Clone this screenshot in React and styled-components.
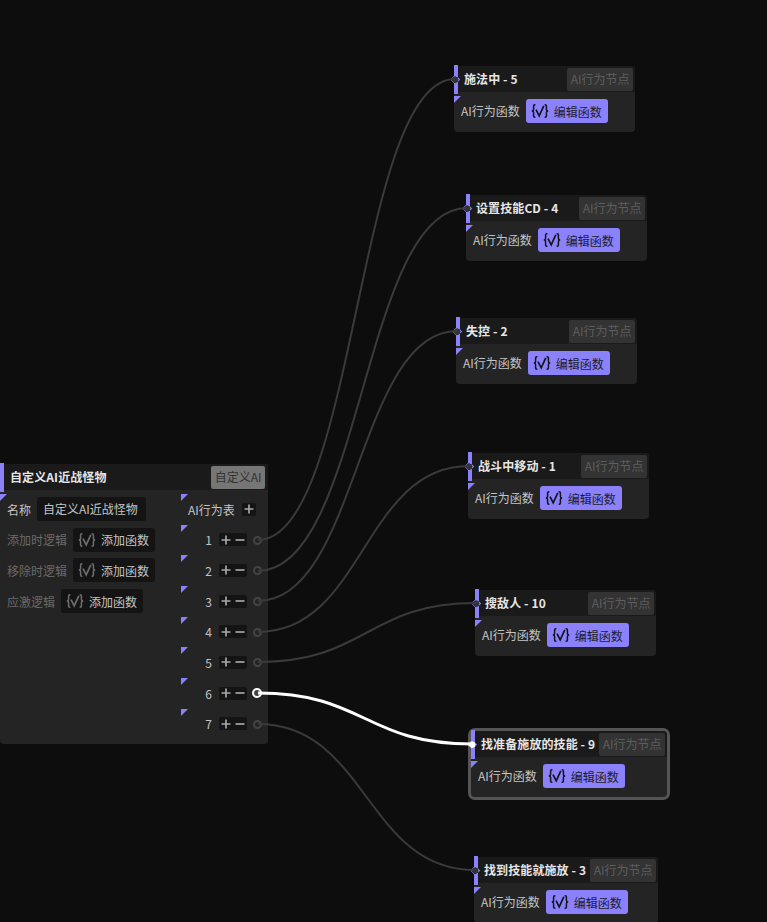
import React from 'react';
import styled, { createGlobalStyle } from 'styled-components';

const nodes = [
  { title: '施法中 - 5', x: 454, y: 66, w: 181 },
  { title: '设置技能CD - 4', x: 466, y: 195, w: 181 },
  { title: '失控 - 2', x: 456, y: 318, w: 181 },
  { title: '战斗中移动 - 1', x: 468, y: 453, w: 181 },
  { title: '搜敌人 - 10', x: 475, y: 590, w: 181 },
  { title: '找准备施放的技能 - 9', x: 471, y: 731, w: 196, selected: true },
  { title: '找到技能就施放 - 3', x: 474, y: 857, w: 184 },
];

const wires = [
  { from: 540, to: 79, x: 455 },
  { from: 571, to: 208, x: 467 },
  { from: 601, to: 331, x: 457 },
  { from: 632, to: 466, x: 469 },
  { from: 662, to: 603, x: 476 },
  { from: 693, to: 744, x: 472, selected: true },
  { from: 724, to: 870, x: 475 },
];

function wirePath({ from, to, x }) {
  const dx = (x - 258) / 2;
  return `M258 ${from} C${258 + dx} ${from} ${x - dx} ${to} ${x} ${to}`;
}

function FnIcon() {
  return (
    <IconSvg viewBox="0 0 18 14" fill="none" stroke="currentColor" strokeWidth="1.5">
      <path d="M4.4 .8H3.8Q2.6 .8 2.6 2V5.5Q2.6 7 .8 7Q2.6 7 2.6 8.5V12Q2.6 13.2 3.8 13.2H4.4" />
      <path d="M13.6 .8H14.2Q15.4 .8 15.4 2V5.5Q15.4 7 17.2 7Q15.4 7 15.4 8.5V12Q15.4 13.2 14.2 13.2H13.6" />
      <path d="M5 5.6L8.2 11.8L12.8 1.8" strokeWidth="1.7" />
    </IconSvg>
  );
}

function PlusIcon() {
  return (
    <SignSvg viewBox="0 0 10 10">
      <path d="M.5 5H9.5M5 .5V9.5" />
    </SignSvg>
  );
}

function MinusIcon() {
  return (
    <SignSvg viewBox="0 0 10 10">
      <path d="M.5 5H9.5" />
    </SignSvg>
  );
}

function BehaviourNode({ title, x, y, w, selected }) {
  return (
    <Node $x={x} $y={y} $w={w} $selected={selected}>
      <TitleBar>
        <AccentBar />
        <InputPin $selected={selected} />
        <Title>{title}</Title>
        <Badge>AI行为节点</Badge>
      </TitleBar>
      <NodeBody>
        <Corner $left={0} $top={4} />
        <NodeLabel>AI行为函数</NodeLabel>
        <FnButton $primary>
          <FnIcon />
          编辑函数
        </FnButton>
      </NodeBody>
    </Node>
  );
}

function App() {
  const rows = [1, 2, 3, 4, 5, 6, 7];
  return (
    <Canvas>
      <GlobalStyle />
      <WireLayer viewBox="0 0 767 922">
        {wires.map((w) => (
          <Wire key={w.from} d={wirePath(w)} $selected={w.selected} />
        ))}
      </WireLayer>

      <MainNode>
        <MainTitleBar>
          <AccentBar />
          <MainTitle>自定义AI近战怪物</MainTitle>
          <MainBadge>自定义AI</MainBadge>
        </MainTitleBar>
        <MainBody>
          <Props>
            <PropRow>
              <Corner $left={-7} $top={-3} />
              <Label>名称</Label>
              <NameInput>自定义AI近战怪物</NameInput>
            </PropRow>
            <PropRow>
              <Label $dim>添加时逻辑</Label>
              <FnButton><FnIcon />添加函数</FnButton>
            </PropRow>
            <PropRow>
              <Label $dim>移除时逻辑</Label>
              <FnButton><FnIcon />添加函数</FnButton>
            </PropRow>
            <PropRow>
              <Label $dim>应激逻辑</Label>
              <FnButton><FnIcon />添加函数</FnButton>
            </PropRow>
          </Props>
          <Table>
            <HeaderRow>
              <Corner $left={0} $top={-3} />
              <Label>AI行为表</Label>
              <SmallBox><PlusIcon /></SmallBox>
            </HeaderRow>
            {rows.map((n) => (
              <ItemRow key={n}>
                <Corner $left={0} $top={-3} />
                <ItemNum>{n}</ItemNum>
                <Controls>
                  <PlusIcon />
                  <MinusIcon />
                </Controls>
                <OutPin $selected={n === 6} />
              </ItemRow>
            ))}
          </Table>
        </MainBody>
      </MainNode>

      {nodes.map((n) => (
        <BehaviourNode key={n.title} {...n} />
      ))}
    </Canvas>
  );
}

const GlobalStyle = createGlobalStyle`
  html, body { margin: 0; padding: 0; background: #0d0d0d; }
  body { font-family: "Noto Sans CJK SC", "Noto Sans", sans-serif; font-size: 12px; }
`;

const Canvas = styled.div`
  position: relative;
  width: 767px;
  height: 922px;
  overflow: hidden;
  background: #0d0d0d;
`;

const WireLayer = styled.svg`
  position: absolute;
  left: 0;
  top: 0;
  width: 767px;
  height: 922px;
  z-index: 2;
  pointer-events: none;
`;

const Wire = styled.path`
  fill: none;
  stroke: ${(p) => (p.$selected ? '#ffffff' : '#3a3a3a')};
  stroke-width: ${(p) => (p.$selected ? 3 : 2)}px;
`;

const IconSvg = styled.svg`
  width: 18px;
  height: 14px;
  margin-right: 5px;
  flex: none;
`;

const SignSvg = styled.svg`
  width: 10px;
  height: 10px;
  flex: none;
  stroke: #a6a6a6;
  stroke-width: 1.7;
  fill: none;
`;

const Node = styled.div`
  position: absolute;
  left: ${(p) => p.$x}px;
  top: ${(p) => p.$y}px;
  width: ${(p) => p.$w}px;
  height: 66px;
  background: #242424;
  border-radius: 4px;
  z-index: 1;
  box-shadow: ${(p) => (p.$selected ? '0 0 0 3px #555555' : 'none')};
`;

const TitleBar = styled.div`
  position: relative;
  display: flex;
  align-items: center;
  justify-content: space-between;
  height: 26px;
  padding: 0 2px 0 10px;
  background: #1a1a1a;
  border-radius: 4px 4px 0 0;
`;

const AccentBar = styled.div`
  position: absolute;
  left: 0;
  top: -1px;
  width: 4px;
  height: 29px;
  background: #8b82fb;
`;

const InputPin = styled.div`
  position: absolute;
  left: -2.25px;
  top: 9.75px;
  width: 6.5px;
  height: 6.5px;
  transform: rotate(45deg);
  background: radial-gradient(circle, ${(p) => (p.$selected ? '#ffffff' : '#333333')} 0 3px, #8b82fb 3.4px);
  z-index: 3;
`;

const Title = styled.div`
  color: #e6e6e6;
  font-weight: 700;
  font-size: 12px;
  letter-spacing: 0.1px;
  line-height: 24px;
  margin-bottom: 1px;
  white-space: nowrap;
`;

const Badge = styled.div`
  height: 23px;
  line-height: 22px;
  padding: 0 3.5px;
  background: #333333;
  color: #5e5e5e;
  border-radius: 2px;
  white-space: nowrap;
`;

const NodeBody = styled.div`
  position: relative;
  display: flex;
  align-items: center;
  gap: 6px;
  height: 38px;
  padding-left: 7px;
`;

const Corner = styled.div`
  position: absolute;
  left: ${(p) => p.$left}px;
  top: ${(p) => p.$top}px;
  width: 0;
  height: 0;
  border-top: 7px solid #8b82fb;
  border-right: 7px solid transparent;
`;

const Label = styled.span`
  color: ${(p) => (p.$dim ? '#6a6a6a' : '#c4c4c4')};
  white-space: nowrap;
`;

const NodeLabel = styled(Label)`
  margin-bottom: 2px;
`;

const FnButton = styled.div`
  display: flex;
  align-items: center;
  height: 24px;
  padding: 0 6px 0 5px;
  border-radius: 3px;
  white-space: nowrap;
  background: ${(p) => (p.$primary ? '#8b82fb' : '#141414')};
  color: ${(p) => (p.$primary ? '#1c1c2e' : '#c4c4c4')};
  svg { color: ${(p) => (p.$primary ? '#14141f' : '#6e6e6e')}; }
`;

const MainNode = styled.div`
  position: absolute;
  left: 0;
  top: 464px;
  width: 268px;
  height: 280px;
  background: #242424;
  border-radius: 0 0 4px 4px;
  z-index: 1;
`;

const MainTitleBar = styled(TitleBar)`
  padding: 0 3px 0 10px;
  border-radius: 0;
`;

const MainTitle = styled(Title)``;

const MainBadge = styled(Badge)`
  padding: 0 3.5px;
  background: #767676;
  color: #333333;
`;

const MainBody = styled.div`
  display: grid;
  grid-template-columns: 181px 87px;
  padding-top: 7px;
`;

const Props = styled.div`
  display: flex;
  flex-direction: column;
  gap: 6.7px;
  padding-left: 7px;
`;

const PropRow = styled.div`
  position: relative;
  display: flex;
  align-items: center;
  gap: 6px;
  height: 24px;
`;

const NameInput = styled.div`
  height: 24px;
  line-height: 23px;
  padding: 0 8px 0 6px;
  background: #141414;
  color: #c4c4c4;
  border-radius: 3px;
  white-space: nowrap;
`;

const Table = styled.div`
  display: flex;
  flex-direction: column;
  gap: 6.7px;
`;

const HeaderRow = styled.div`
  position: relative;
  display: flex;
  align-items: center;
  gap: 7px;
  height: 24px;
  padding-left: 7px;
`;

const SmallBox = styled.div`
  display: flex;
  align-items: center;
  justify-content: center;
  width: 14px;
  height: 13px;
  background: #141414;
  border-radius: 2px;
`;

const ItemRow = styled.div`
  position: relative;
  display: flex;
  align-items: center;
  height: 24px;
`;

const ItemNum = styled.span`
  width: 31px;
  text-align: right;
  color: #c4c4c4;
  margin-right: 7px;
`;

const Controls = styled.div`
  display: flex;
  align-items: center;
  justify-content: space-around;
  width: 28px;
  height: 13px;
  background: #141414;
  border-radius: 2px;
`;

const OutPin = styled.div`
  position: absolute;
  left: ${(p) => (p.$selected ? 71 : 72)}px;
  top: ${(p) => (p.$selected ? 7 : 8)}px;
  width: ${(p) => (p.$selected ? 6 : 5)}px;
  height: ${(p) => (p.$selected ? 6 : 5)}px;
  border-radius: 50%;
  background: ${(p) => (p.$selected ? '#444444' : '#242424')};
  border: ${(p) => (p.$selected ? '2.5px solid #ffffff' : '2px solid #444444')};
  z-index: 3;
`;

export default App;
